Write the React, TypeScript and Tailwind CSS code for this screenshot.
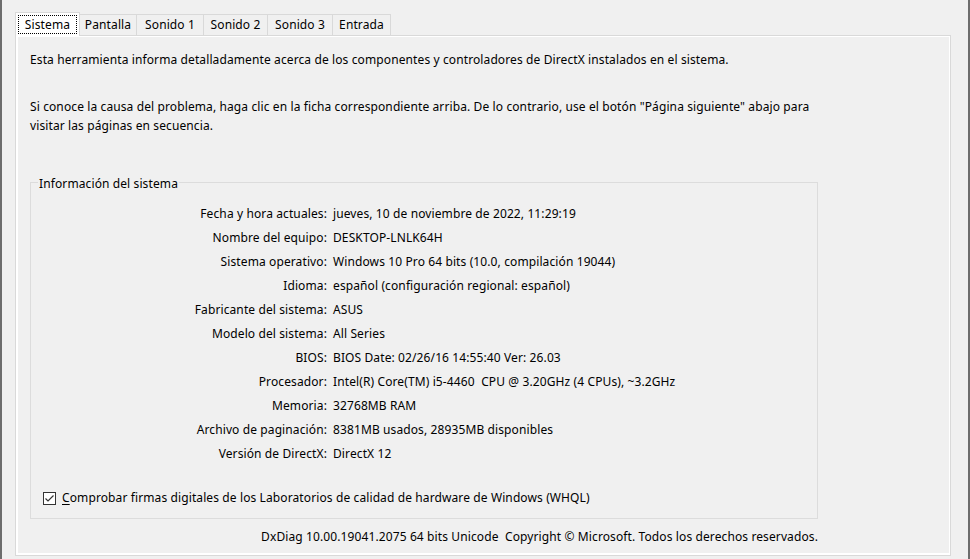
import React from "react";

const filas: [string, string][] = [
  ["Fecha y hora actuales:", "jueves, 10 de noviembre de 2022, 11:29:19"],
  ["Nombre del equipo:", "DESKTOP-LNLK64H"],
  ["Sistema operativo:", "Windows 10 Pro 64 bits (10.0, compilación 19044)"],
  ["Idioma:", "español (configuración regional: español)"],
  ["Fabricante del sistema:", "ASUS"],
  ["Modelo del sistema:", "All Series"],
  ["BIOS:", "BIOS Date: 02/26/16 14:55:40 Ver: 26.03"],
  ["Procesador:", "Intel(R) Core(TM) i5-4460  CPU @ 3.20GHz (4 CPUs), ~3.2GHz"],
  ["Memoria:", "32768MB RAM"],
  ["Archivo de paginación:", "8381MB usados, 28935MB disponibles"],
  ["Versión de DirectX:", "DirectX 12"],
];

const pestanas = ["Pantalla", "Sonido 1", "Sonido 2", "Sonido 3", "Entrada"];
const anchos = ["w-[57px]", "w-[67px]", "w-[64px]", "w-[65px]", "w-[58px]"];

export default function App() {
  return (
    <div
      className="w-[970px] h-[559px] overflow-hidden bg-[#f0f0f0] border-l-2 border-r-2 border-[#6d6d6d] pl-[13px] pt-[12px] text-[12px] tracking-[0.11px] text-black"
      style={{ fontFamily: '"Noto Sans", "Open Sans", sans-serif' }}
    >
      {/* Tabs */}
      <div className="flex items-end h-[23px]">
        <div className="relative z-10 -mb-px h-[24px] w-[65px] bg-white border border-b-0 border-[#d9d9d9] p-[2px]">
          <div className="h-full border border-dotted border-black flex items-center justify-center leading-none">
            Sistema
          </div>
        </div>
        {pestanas.map((p, i) => (
          <div
            key={p}
            className={`${anchos[i]} h-[21px] border border-l-0 border-b-0 border-[#d9d9d9] bg-[#f0f0f0] flex items-center justify-center leading-none`}
          >
            {p}
          </div>
        ))}
      </div>

      {/* Panel */}
      <div className="w-[936px] h-[521px] border border-[#d9d9d9] flex">
        <div className="flex-1 border-t border-r border-b-2 border-l-2 border-white pl-[12px]">
          <p className="mt-[13px] leading-[19px]">
            Esta herramienta informa detalladamente acerca de los componentes y controladores de DirectX instalados en el sistema.
          </p>
          <p className="mt-[28px] leading-[19px] w-[810px]">
            Si conoce la causa del problema, haga clic en la ficha correspondiente arriba. De lo contrario, use el botón "Página siguiente" abajo para visitar las páginas en secuencia.
          </p>

          {/* Group box */}
          <div className="relative mt-[47px] w-[788px] h-[337px] border border-[#dcdcdc] pt-[19px]">
            <span className="absolute -top-[8px] left-[7px] bg-[#f0f0f0] px-[1px] leading-[17px]">
              Información del sistema
            </span>
            {filas.map(([k, v]) => (
              <div key={k} className="flex h-[24px] items-center">
                <div className="w-[296px] text-right">{k}</div>
                <div className="pl-[6px] whitespace-pre">{v}</div>
              </div>
            ))}
            <div className="flex items-center mt-[23px] pl-[12px]">
              <div className="w-[13px] h-[13px] border border-[#333333] bg-white flex items-center justify-center">
                <svg width="11" height="11" viewBox="0 0 11 11">
                  <path d="M1.5 5.5 L4 8 L9.5 2.5" fill="none" stroke="#333333" strokeWidth="1.2" />
                </svg>
              </div>
              <span className="ml-[6px]">
                <span className="underline underline-offset-2">C</span>omprobar firmas digitales de los Laboratorios de calidad de hardware de Windows (WHQL)
              </span>
            </div>
          </div>

          <div className="w-[788px] mt-[8px] text-right leading-[19px] whitespace-pre">
            DxDiag 10.00.19041.2075 64 bits Unicode  Copyright © Microsoft. Todos los derechos reservados.
          </div>
        </div>
      </div>
    </div>
  );
}
